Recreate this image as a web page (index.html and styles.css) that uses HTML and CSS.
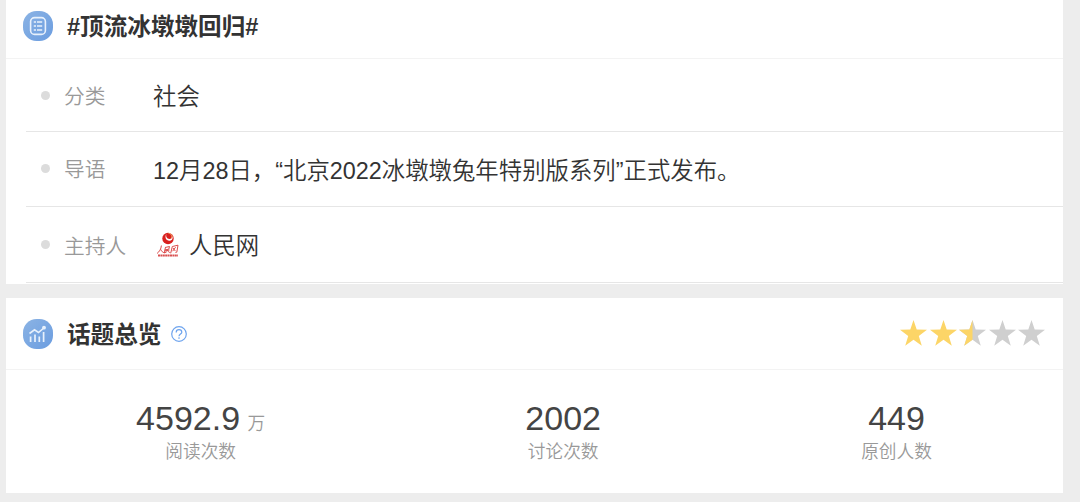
FILE: index.html
```html
<!DOCTYPE html>
<html lang="zh-CN">
<head>
    <meta charset="UTF-8">
    <meta name="viewport" content="width=device-width, initial-scale=1.0">
    <title>话题详情</title>
    <link rel="stylesheet" href="styles.css">
</head>
<body>
    <section class="card topic">
        <div class="card-header">
            <svg class="icon" viewBox="0 0 30 30">
                <defs>
                    <linearGradient id="blue" x1="0" y1="0" x2="1" y2="1">
                        <stop offset="0" stop-color="#8bb3e4"/>
                        <stop offset="1" stop-color="#6b9de0"/>
                    </linearGradient>
                </defs>
                <rect width="30" height="30" rx="13.5" fill="url(#blue)"/>
                <rect x="7.6" y="6.6" width="14.8" height="16.8" rx="4" fill="none" stroke="#e8f1fc" stroke-width="1.6"/>
                <path d="M10.800 11h2.200M14 11h5.200M10.800 15h2.200M14 15h5.200M10.800 19h2.200M14 19h5.200" fill="none" stroke="#e8f1fc" stroke-width="1.500"/>
            </svg>
            <h2>#顶流冰墩墩回归#</h2>
        </div>
        <ul class="info">
            <li class="row-type">
                <span class="label">分类</span>
                <span class="value">社会</span>
            </li>
            <li class="row-intro">
                <span class="label">导语</span>
                <span class="value">12月28日，“北京2022冰墩墩兔年特别版系列”正式发布。</span>
            </li>
            <li class="row-host">
                <span class="label">主持人</span>
                <svg class="avatar" viewBox="0 0 24 28">
                    <circle cx="12" cy="7.5" r="5.7" fill="#d9201f"/>
                    <path d="M10.500 2.800c-1 2.700.3 5.200 3 5.200 2 0 3-1.300 2.700-3.200 1.300 2.700-.3 5-2.900 5-3.300 0-5-3.700-2.800-7z" fill="#fff"/>
                    <path d="M12.500 2.300c3 .2 4.200 3 2.700 5" fill="none" stroke="#f6b26b" stroke-width="1"/>
                    <path d="M5.400 14.500c-.3 3.500-1.800 6-4.400 8M4.800 18.500c1 2 1.900 2.900 3.300 3.200M9 16.500l4.500-1-.7 2.700-4 .7M9.400 16.500l-1 5.500 2.400-1.300M8.500 20l5-1M11.300 18.500c.6 2 1.500 3 3 3M16.300 15.500l-1.600 6.800M16.300 15.500l5.700-1.300-1.200 7-1.400.2M17 17l2.300 3M19.600 16.200l-3 4" fill="none" stroke="#dc4b4b" stroke-width="1"/>
                    <path d="M2 24.500h20" fill="none" stroke="#d95050" stroke-width="1.800" stroke-dasharray="2 .4"/>
                </svg>
                <span class="value">人民网</span>
            </li>
        </ul>
    </section>

    <section class="card overview">
        <div class="card-header">
            <svg class="icon" viewBox="0 0 30 30">
                <rect width="30" height="30" rx="13.5" fill="url(#blue)"/>
                <path d="M7.600 17.500v5.500M12 15.500v7.500M16.300 17.500v5.500M20.600 13v10" fill="none" stroke="#e8f1fc" stroke-width="1.700"/>
                <path d="M6.500 14.500l5-3.700 4 2.700 5.300-4.500" fill="none" stroke="#e8f1fc" stroke-width="1.600"/>
                <circle cx="21" cy="8.700" r="1.900" fill="#e8f1fc"/>
            </svg>
            <h2>话题总览</h2>
            <svg class="help" viewBox="0 0 16 16">
                <circle cx="8" cy="8" r="7.300" fill="none" stroke="#6ea4ee" stroke-width="1.200"/>
                <path d="M5.200 6.400C5.200 4.700 6.400 3.700 8 3.700s2.800 1 2.800 2.500C10.800 8 8 8 8 10.200" fill="none" stroke="#6ea4ee" stroke-width="1.200"/>
                <circle cx="8" cy="12.100" r=".8" fill="#6ea4ee"/>
            </svg>
            <div class="stars">
                <svg class="on" viewBox="0 0 27 26"><path d="M13.500 0l3.200 9.500 10.300.2-8.200 6.200 3 9.900-8.300-6-8.300 6 3-9.900L0 9.700l10.300-.2z"/></svg>
                <svg class="on" viewBox="0 0 27 26"><path d="M13.500 0l3.200 9.500 10.300.2-8.200 6.200 3 9.900-8.300-6-8.300 6 3-9.900L0 9.700l10.300-.2z"/></svg>
                <svg viewBox="0 0 27 26"><path d="M13.500 0l3.200 9.500 10.300.2-8.200 6.200 3 9.900-8.300-6-8.300 6 3-9.900L0 9.700l10.300-.2z"/><path class="half" d="M13.500 0v19.800l-8.300 6 3-9.900L0 9.700l10.300-.2z"/></svg>
                <svg viewBox="0 0 27 26"><path d="M13.500 0l3.200 9.500 10.300.2-8.200 6.200 3 9.900-8.300-6-8.300 6 3-9.900L0 9.700l10.300-.2z"/></svg>
                <svg viewBox="0 0 27 26"><path d="M13.500 0l3.200 9.500 10.300.2-8.200 6.200 3 9.900-8.300-6-8.300 6 3-9.900L0 9.700l10.300-.2z"/></svg>
            </div>
        </div>
        <div class="stats">
            <div class="stat">
                <div class="num">4592.9 <small>万</small></div>
                <div class="name">阅读次数</div>
            </div>
            <div class="stat">
                <div class="num">2002</div>
                <div class="name">讨论次数</div>
            </div>
            <div class="stat">
                <div class="num">449</div>
                <div class="name">原创人数</div>
            </div>
        </div>
    </section>
</body>
</html>
```

FILE: styles.css
```css
* {
    box-sizing: border-box;
}
body {
    margin: 0;
    padding: 0 17px 0 6px;
    height: 502px;
    overflow: hidden;
    background-color: #ededed;
    color: #333;
    font-family: "Liberation Sans", "Noto Sans CJK SC", sans-serif;
}
.card {
    background-color: #fff;
}
.topic {
    height: 284px;
    margin-bottom: 14px;
}
.overview {
    height: 195px;
}
.card-header {
    display: flex;
    align-items: center;
    padding: 0 18px 0 17px;
    border-bottom: 1px solid #f3f3f3;
}
.topic .card-header {
    height: 59px;
    padding-bottom: 7px;
}
.overview .card-header {
    height: 72px;
}
.icon {
    width: 30px;
    height: 30px;
    margin-right: 14px;
}
h2 {
    margin: 2px 0 0;
    font-size: 23.6px;
    line-height: 34px;
    font-weight: bold;
}
.help {
    width: 16px;
    height: 16px;
    margin-left: 10px;
}
.stars {
    display: flex;
    gap: 2.4px;
    margin-left: auto;
    margin-bottom: 2px;
}
.stars svg {
    width: 27px;
    height: 26px;
    fill: #cfcfcf;
}
.stars .on, .stars .half {
    fill: #fcd567;
}
.info {
    list-style: none;
    margin: 0;
    padding: 0 0 0 20px;
}
.info li {
    display: flex;
    align-items: center;
    padding-left: 15px;
    border-bottom: 1px solid #e6e6e6;
}
.info li::before {
    content: "";
    width: 9px;
    height: 9px;
    margin-right: 14px;
    border-radius: 50%;
    background-color: #dcdcdc;
}
.row-type {
    height: 73px;
}
.row-intro {
    height: 75px;
}
.row-intro::before, .row-intro .label {
    margin-bottom: 2px;
}
.row-host {
    height: 76px;
}
.row-host .value {
    margin-bottom: 2px;
}
.label {
    width: 89px;
    color: #999;
    font-size: 20.7px;
    font-weight: 350;
}
.value {
    font-size: 23.4px;
    font-weight: 350;
}
.avatar {
    width: 24px;
    height: 28px;
    margin: 0 9px 0 3px;
}
.stats {
    display: flex;
    justify-content: space-around;
    padding: 27px 1px 0 0;
    text-align: center;
}
.num {
    height: 42px;
    font-size: 34px;
    line-height: 42px;
    color: #444;
}
.num small {
    margin-left: -2px;
    font-size: 17.7px;
    font-weight: 350;
    color: #999;
}
.name {
    padding-top: 1px;
    font-size: 17.7px;
    line-height: 24px;
    font-weight: 350;
    color: #999;
}
```
